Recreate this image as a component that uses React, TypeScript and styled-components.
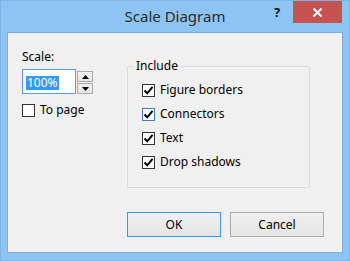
import styled, { createGlobalStyle } from "styled-components";

const Global = createGlobalStyle`
  body {
    margin: 0;
    font-family: "Noto Sans", "Liberation Sans", sans-serif;
    font-size: 12px;
    color: #000;
  }
`;

const CheckMark = () => (
  <svg width="11" height="11" viewBox="0 0 11 11">
    <path d="M1.5 5.5 L4.2 8.3 L9.6 1.8" fill="none" stroke="#000" strokeWidth="2" />
  </svg>
);

const Arrow = ({ down }: { down?: boolean }) => (
  <svg width="7" height="4" viewBox="0 0 7 4">
    <path d={down ? "M0 0 L7 0 L3.5 4 Z" : "M0 4 L7 4 L3.5 0 Z"} fill="#000" />
  </svg>
);

const Check = ({ label, checked, focused }: { label: string; checked?: boolean; focused?: boolean }) => (
  <CheckRow>
    <Box $focused={focused}>{checked && <CheckMark />}</Box>
    <span>{label}</span>
  </CheckRow>
);

const App = () => {
  return (
    <Window>
      <Global />
      <TitleBar>
        <Title>Scale Diagram</Title>
        <Help>?</Help>
        <Close>
          <svg width="9" height="9" viewBox="0 0 9 9">
            <path d="M0.5 0.5 L8.5 8.5 M8.5 0.5 L0.5 8.5" stroke="#fff" strokeWidth="2" />
          </svg>
        </Close>
      </TitleBar>
      <Client>
        <Top>
          <LeftCol>
            <Label>Scale:</Label>
            <ScaleRow>
              <Input>
                <Selected>100%</Selected>
              </Input>
              <Spinner>
                <SpinButton>
                  <Arrow />
                </SpinButton>
                <SpinButton>
                  <Arrow down />
                </SpinButton>
              </Spinner>
            </ScaleRow>
            <PageOption>
              <Check label="To page" />
            </PageOption>
          </LeftCol>
          <Group>
            <Legend>Include</Legend>
            <CheckList>
              <Check label="Figure borders" checked />
              <Check label="Connectors" checked focused />
              <Check label="Text" checked />
              <Check label="Drop shadows" checked />
            </CheckList>
          </Group>
        </Top>
        <Buttons>
          <Button $default>OK</Button>
          <Button>Cancel</Button>
        </Buttons>
      </Client>
    </Window>
  );
};
export default App;

const Window = styled.div`
  width: 350px;
  height: 261px;
  box-sizing: border-box;
  background: #8ec4f4;
  border: 1px solid #7db4e8;
  padding: 0 7px 8px;
  display: flex;
  flex-direction: column;
`;
const TitleBar = styled.div`
  height: 32px;
  display: flex;
  align-items: flex-start;
`;
const Title = styled.div`
  flex: 1;
  padding-left: 77px;
  text-align: center;
  font-size: 15px;
  line-height: 31px;
  color: #2b2b2b;
`;
const Help = styled.div`
  width: 24px;
  margin-right: 4px;
  line-height: 22px;
  text-align: center;
  font-weight: bold;
  font-size: 13px;
  color: #111;
`;
const Close = styled.div`
  width: 49px;
  height: 22px;
  background: #c75050;
  display: flex;
  align-items: center;
  justify-content: center;
`;
const Client = styled.div`
  flex: 1;
  background: #f0f0f0;
  box-shadow: 0 0 0 1px #7aafe0;
  padding: 16px 18px 15px 14px;
  display: flex;
  flex-direction: column;
`;
const Top = styled.div`
  display: flex;
`;
const LeftCol = styled.div`
  width: 105px;
  display: flex;
  flex-direction: column;
`;
const Label = styled.div`
  line-height: 16px;
`;
const ScaleRow = styled.div`
  display: flex;
  gap: 1px;
  margin-top: 4px;
`;
const Input = styled.div`
  width: 54px;
  height: 25px;
  box-sizing: border-box;
  background: #fff;
  border: 1px solid #569de5;
  padding: 4px 0 0 3px;
`;
const Selected = styled.span`
  display: inline-block;
  background: #3399ff;
  color: #fff;
  line-height: 14px;
  padding: 0 1px;
`;
const Spinner = styled.div`
  display: flex;
  flex-direction: column;
  gap: 1px;
  padding-top: 2px;
`;
const SpinButton = styled.div`
  width: 16px;
  height: 11px;
  box-sizing: border-box;
  border: 1px solid #acacac;
  background: linear-gradient(#f0f0f0, #e5e5e5);
  display: flex;
  align-items: center;
  justify-content: center;
`;
const PageOption = styled.div`
  margin-top: 4px;
`;
const CheckRow = styled.div`
  display: flex;
  align-items: center;
  gap: 5px;
  height: 24px;
  line-height: 16px;
`;
const Box = styled.span<{ $focused?: boolean }>`
  width: 13px;
  height: 13px;
  box-sizing: border-box;
  border: 1px solid ${(p) => (p.$focused ? "#3c7fd1" : "#333")};
  background: #fff;
  display: flex;
  align-items: center;
  justify-content: center;
`;
const Group = styled.fieldset`
  width: 183px;
  height: 130px;
  box-sizing: border-box;
  margin: 9px 0 0 0;
  padding: 0;
  border: 1px solid #dcdcdc;
`;
const Legend = styled.legend`
  margin-left: 6px;
  padding: 0 2px;
  line-height: 16px;
`;
const CheckList = styled.div`
  padding: 4px 0 0 14px;
`;
const Buttons = styled.div`
  margin-top: auto;
  display: flex;
  justify-content: flex-end;
  gap: 9px;
`;
const Button = styled.div<{ $default?: boolean }>`
  width: 94px;
  height: 25px;
  box-sizing: border-box;
  border: 1px solid ${(p) => (p.$default ? "#3399ff" : "#acacac")};
  background: linear-gradient(#f0f0f0, #e5e5e5);
  display: flex;
  align-items: center;
  justify-content: center;
`;
